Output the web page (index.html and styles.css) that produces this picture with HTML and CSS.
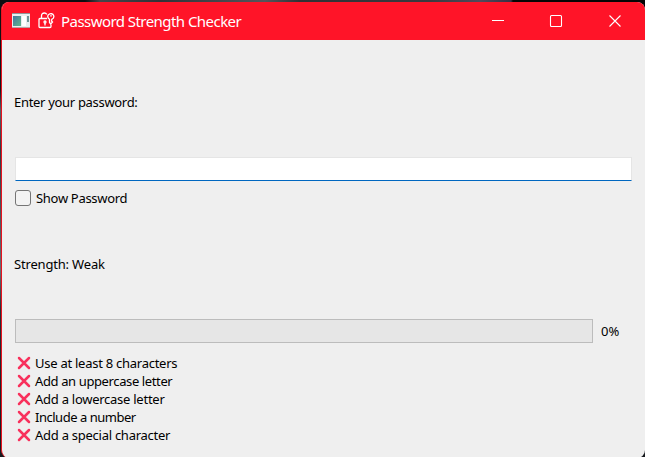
FILE: index.html
```
<!DOCTYPE html>
<html lang="en">
<head>
<meta charset="utf-8">
<title>Password Strength Checker</title>
<link rel="stylesheet" href="styles.css">
</head>
<body>
<div class="window">
  <header class="titlebar">
    <svg class="app-icon" width="18" height="15" viewBox="0 0 18 15">
      <defs><linearGradient id="g" x1="0" y1="0" x2="1" y2="1"><stop offset="0" stop-color="#4377a0"/><stop offset="1" stop-color="#62b58a"/></linearGradient></defs>
      <rect width="18" height="15" fill="#e9eef0"/>
      <rect x="0" y="0" width="18" height="1" fill="#8f9698"/>
      <rect x="1" y="3" width="8" height="10" fill="url(#g)"/>
      <rect x="10" y="3" width="4" height="10" fill="#fff"/>
      <rect x="15" y="3" width="2" height="6" fill="#6f9396"/>
      <rect x="0" y="14" width="18" height="1" fill="#b9a3a3"/>
    </svg>
    <svg class="lock-icon" width="17" height="17" viewBox="0 0 17 17" fill="none" stroke="#fff" stroke-width="1.3">
      <path d="M9 6.500H2Q1 6.500 1 7.500V14.500Q1 15.500 2 15.500H12Q13 15.500 13 14.500V12.500"/>
      <path d="M3.500 6.500V4Q3.500 1 6.500 1Q8 1 8.800 2.300"/>
      <circle cx="7" cy="10" r="1"/><path d="M7 11V13.500"/>
      <path d="M11.500 7.300C9.300 6 9.200 3.200 11 2.200C12.500 1.200 15 1.600 15.600 3.400C16.200 5.200 15.200 6.800 13.800 7.300L13.500 9L14.500 10L12.700 12L11.500 10.500Z"/>
      <path d="M12.200 3.800H13.800"/>
    </svg>
    <h1 class="title">Password Strength Checker</h1>
    <svg class="controls" width="130" height="14" viewBox="0 0 130 14" fill="none" stroke="#fff" stroke-width="1.1">
      <path d="M0 6.500H12"/>
      <rect x="58.500" y="1.500" width="11" height="11" rx="1"/>
      <path d="M117.500 1.500L128.500 12.500M128.500 1.500L117.500 12.500"/>
    </svg>
  </header>
  <main class="content">
    <label class="prompt" for="pw">Enter your password:</label>
    <input class="field" id="pw" type="password">
    <label class="show"><span class="box"></span><span>Show Password</span></label>
    <p class="strength">Strength: Weak</p>
    <div class="progress"><div class="bar"></div><span class="percent">0%</span></div>
    <ul class="rules">
      <li><svg class="cross" viewBox="0 0 14 14"><path d="M2 2L12 12M12 2L2 12"/></svg><span>Use at least 8 characters</span></li>
      <li class="tight"><svg class="cross" viewBox="0 0 14 14"><path d="M2 2L12 12M12 2L2 12"/></svg><span>Add an uppercase letter</span></li>
      <li><svg class="cross" viewBox="0 0 14 14"><path d="M2 2L12 12M12 2L2 12"/></svg><span>Add a lowercase letter</span></li>
      <li class="tighter"><svg class="cross" viewBox="0 0 14 14"><path d="M2 2L12 12M12 2L2 12"/></svg><span>Include a number</span></li>
      <li><svg class="cross" viewBox="0 0 14 14"><path d="M2 2L12 12M12 2L2 12"/></svg><span>Add a special character</span></li>
    </ul>
  </main>
</div>
</body>
</html>
```
FILE: styles.css
```
* { box-sizing: border-box; }
body {
  margin: 0;
  padding: 2px 0 0 1px;
  height: 457px;
  overflow: hidden;
  background:
    linear-gradient(90deg, #0b0d10 0, #0b0d10 85px, #45464b 100px, #303238 160px, #55565c 265px, #303135 300px, #3a3a40 430px, #514a5c 480px, #373145 511px, #050505 513px) 0 0 / 100% 10px no-repeat,
    linear-gradient(#0b0d10 0, #15181c 90px, #5b5e64 110px, #34383e 150px, #6a6d72 270px, #2a2d33 310px, #17191d 100%);
  font: 13px/18px "Noto Sans", sans-serif;
  color: #000;
}
.window {
  display: flex;
  flex-direction: column;
  width: 644px;
  height: 456px;
  border-left: 1px solid #e8121f;
  border-radius: 8px;
  background: #efefef;
  overflow: hidden;
}
.titlebar {
  display: flex;
  align-items: center;
  height: 38px;
  flex: none;
  margin-left: -1px;
  padding-left: 11px;
  background: #ff1428;
  color: #fff;
}
.app-icon { margin-top: -1px; }
.lock-icon { margin: -1px 0 0 8px; }
.title {
  margin: 0 0 0 6px;
  width: 190px;
  font-size: 15px;
  line-height: 20px;
  font-weight: 400;
  letter-spacing: -0.55px;
  white-space: nowrap;
}
.controls { margin-left: 241px; flex: none; }
.content { display: flex; flex-direction: column; padding: 53px 13px 0 12px; }
.prompt { height: 64px; letter-spacing: -0.31px; }
.field {
  width: 617px;
  height: 24px;
  margin-left: 1px;
  border: 1px solid #e5e5e5;
  border-bottom: 1px solid #0067c0;
  background: #fff;
  outline: none;
  padding: 0 4px;
}
.show { display: flex; align-items: center; gap: 5px; margin: 8px 0 0 1px; letter-spacing: -0.3px; }
.box { width: 16px; height: 16px; border: 1px solid #757575; border-radius: 3px; background: #f3f3f3; }
.strength { margin: 48px 0 0; height: 64px; letter-spacing: -0.18px; }
.progress { display: flex; align-items: center; gap: 8px; margin-left: 1px; }
.bar { width: 578px; height: 24px; border: 1px solid #bcbcbc; background: #e6e6e6; }
.rules { list-style: none; margin: 11px 0 0 3px; padding: 0; letter-spacing: -0.26px; }
.rules li { display: flex; align-items: center; gap: 4px; height: 18px; white-space: nowrap; }
.rules .tight { letter-spacing: -0.38px; }
.rules .tighter { letter-spacing: -0.48px; }
.cross { width: 14px; height: 14px; fill: none; stroke: #f8315c; stroke-width: 2.5; stroke-linecap: round; }
```
